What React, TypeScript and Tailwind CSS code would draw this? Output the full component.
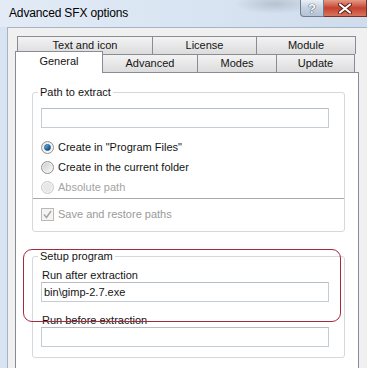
import React from "react"

const font = "font-['Liberation_Sans',Arial,sans-serif]"

function Radio({ checked, disabled }: { checked?: boolean; disabled?: boolean }) {
  return (
    <div
      className={`flex h-[13px] w-[13px] items-center justify-center rounded-full border ${
        disabled ? "border-[#c8c8c8] bg-[#f2f2f2]" : "border-[#8e8f8f] bg-gradient-to-br from-[#e6e6e6] to-[#fbfbfb]"
      }`}
    >
      {checked && (
        <div className="h-[7px] w-[7px] rounded-full border border-[#1a5a8c] bg-gradient-to-br from-[#7fc3f0] via-[#2a77b5] to-[#0f3f6d]" />
      )}
      {!checked && !disabled && <div className="h-[9px] w-[9px] rounded-full bg-gradient-to-br from-[#cfcfcf] to-[#f6f6f6]" />}
      {disabled && <div className="h-[9px] w-[9px] rounded-full bg-[#e8e8e8]" />}
    </div>
  )
}

function Tab({ label, w, selected }: { label: string; w: string; selected?: boolean }) {
  if (selected) {
    return (
      <div
        className={`${w} relative z-10 -mb-px -mt-[3px] flex h-[22px] justify-center border border-b-0 border-[#898c95] bg-white pt-[3px] leading-[13px]`}
      >
        {label}
      </div>
    )
  }
  return (
    <div
      className={`${w} -ml-px flex h-[18px] items-center justify-center border border-b-0 border-[#898c95] bg-gradient-to-b from-[#f3f3f3] to-[#dcdcdc] leading-[13px] first:ml-0`}
    >
      {label}
    </div>
  )
}

export default function App() {
  return (
    <div
      className={`${font} relative flex h-[368px] w-[367px] flex-col overflow-hidden bg-[#d8e4f1] text-[11px] text-[#141414]`}
    >
      {/* Title bar */}
      <div className="flex h-[27px] shrink-0 bg-[radial-gradient(ellipse_40px_10px_at_275px_4px,#b7c3d0,transparent),linear-gradient(to_right,#e2ebf6,#d9e5f2,#cfdced)]">
        <div className="pl-[9px] pt-[6px] text-[12px] leading-[15px] tracking-[-0.15px] text-black">
          Advanced SFX options
        </div>
        <div className="ml-auto flex self-start">
          <div className="flex h-[17px] w-[24px] items-center justify-center rounded-bl-[4px] border border-t-0 border-[#6f7d90] bg-gradient-to-b from-[#e9eff6] via-[#c5d1df] to-[#b3c3d6] text-[13px] font-bold leading-none text-white [text-shadow:0_0_1px_#2f3d52,0_0_1px_#2f3d52]">
            ?
          </div>
          <div className="flex h-[17px] w-[43px] items-center justify-center border border-l-0 border-t-0 border-[#7a2f26] bg-gradient-to-b from-[#e49a87] via-[#c4402f] to-[#d6745e]">
            <svg width="14" height="11" viewBox="0 0 14 11">
              <path d="M2 1.5 L12 9.5 M12 1.5 L2 9.5" stroke="#5a1d16" strokeWidth="4" strokeLinecap="round" />
              <path d="M2 1.5 L12 9.5 M12 1.5 L2 9.5" stroke="#ffffff" strokeWidth="2.2" strokeLinecap="round" />
            </svg>
          </div>
        </div>
      </div>

      {/* Client area */}
      <div className="ml-[7px] flex-1 border-l border-t border-[#a7b4c4] bg-[#f0f0f0] pl-[7px] pt-[8px]">
        {/* Tabs */}
        <div className="ml-[2px] flex">
          <Tab label="Text and icon" w="w-[136px]" />
          <Tab label="License" w="w-[105px]" />
          <Tab label="Module" w="w-[100px]" />
        </div>
        <div className="flex h-[18px] items-start">
          <Tab label="General" w="w-[88px]" selected />
          <Tab label="Advanced" w="w-[96px]" />
          <Tab label="Modes" w="w-[80px]" />
          <Tab label="Update" w="w-[79px]" />
        </div>

        {/* Panel */}
        <div className="h-[320px] w-[344px] border border-[#898c95] bg-white pt-[19px]">
          {/* Path to extract */}
          <div className="relative ml-[16px] w-[313px] rounded-[3px] border border-[#d5d9dd]">
            <span className="absolute -top-[7px] left-[5px] bg-white px-[2px] leading-[13px]">Path to extract</span>
            <div className="pl-[8px] pt-[15px]">
              <div className="h-[20px] w-[288px] border border-[#c4ccd4] border-t-[#b4bcc6] bg-white" />
              <div className="mt-[9px]">
                <div className="flex h-[20px] items-center gap-[4px]">
                  <Radio checked />
                  <span>Create in "Program Files"</span>
                </div>
                <div className="flex h-[20px] items-center gap-[4px]">
                  <Radio />
                  <span>Create in the current folder</span>
                </div>
                <div className="flex h-[20px] items-center gap-[4px] text-[#a3a3a3]">
                  <Radio disabled />
                  <span>Absolute path</span>
                </div>
              </div>
            </div>
            <div className="mt-[1px] border-t border-[#a9a9a9] pb-[7px] pl-[8px] pt-[5px]">
              <div className="flex h-[20px] items-center gap-[4px] text-[#9a9a9a]">
                <div className="flex h-[13px] w-[13px] items-center justify-center border border-[#b8b8b8] bg-[#f4f4f4]">
                  <svg width="9" height="9" viewBox="0 0 9 9">
                    <path d="M1 4.5 L3.5 7.5 L8 1" fill="none" stroke="#a3a3a3" strokeWidth="1.4" />
                  </svg>
                </div>
                <span>Save and restore paths</span>
              </div>
            </div>
          </div>

          {/* Setup program */}
          <div className="relative ml-[16px] mt-[24px] w-[313px] rounded-[3px] border border-[#d5d9dd] pb-[10px] pl-[8px] pt-[12px]">
            <span className="absolute -top-[7px] left-[5px] bg-white px-[2px] leading-[13px]">Setup program</span>
            <div className="pl-[1px] leading-[13px]">Run after extraction</div>
            <div className="flex h-[20px] w-[288px] items-center border border-[#c4ccd4] border-t-[#b4bcc6] bg-white pl-[2px]">
              bin\gimp-2.7.exe
            </div>
            <div className="mt-[12px] pl-[1px] leading-[13px]">Run before extraction</div>
            <div className="h-[20px] w-[288px] border border-[#c4ccd4] border-t-[#b4bcc6] bg-white" />
          </div>
        </div>
      </div>

      {/* Red annotation */}
      <div className="pointer-events-none absolute left-[23px] top-[249px] h-[73px] w-[318px] rounded-[9px] border border-[#a62a3d]" />
    </div>
  )
}
